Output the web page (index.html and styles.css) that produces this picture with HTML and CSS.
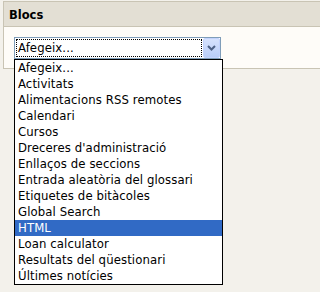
FILE: index.html
```html
<!DOCTYPE html>
<html lang="ca">
<head>
<meta charset="utf-8">
<title>Blocs</title>
<link rel="stylesheet" href="styles.css">
</head>
<body>
<div class="block">
  <div class="block-header"><h2 class="block-title">Blocs</h2></div>
  <div class="block-body">
    <div class="select-wrap">
      <div class="select">
        <div class="select-value">Afegeix...</div>
        <div class="select-button">
          <svg width="9" height="6" viewBox="0 0 9 6" aria-hidden="true"><polyline points="1,1 4.5,4.5 8,1" fill="none" stroke="#4d6185" stroke-width="2"/></svg>
        </div>
      </div>
      <ul class="listbox">
        <li class="option">Afegeix...</li>
        <li class="option">Activitats</li>
        <li class="option">Alimentacions RSS remotes</li>
        <li class="option">Calendari</li>
        <li class="option">Cursos</li>
        <li class="option">Dreceres d'administració</li>
        <li class="option">Enllaços de seccions</li>
        <li class="option">Entrada aleatòria del glossari</li>
        <li class="option">Etiquetes de bitàcoles</li>
        <li class="option">Global Search</li>
        <li class="option selected">HTML</li>
        <li class="option">Loan calculator</li>
        <li class="option">Resultats del qüestionari</li>
        <li class="option">Últimes notícies</li>
      </ul>
    </div>
  </div>
</div>
</body>
</html>
```

FILE: styles.css
```css
html, body {
  margin: 0;
  padding: 0;
  overflow: hidden;
}
body {
  background: #f3f1eb;
  font-family: "DejaVu Sans Condensed", "DejaVu Sans", Verdana, sans-serif;
  color: #000;
  height: 292px;
}
.block {
  margin: 1px 0 0 3px;
  border: 1px solid #c9c4b4;
  border-right: 0;
}
.block-header {
  background: #e3dfd4;
  border-bottom: 1px solid #c9c4b4;
  padding: 6px 0 4px 5px;
}
.block-title {
  margin: 0;
  font-family: "DejaVu Sans", Verdana, sans-serif;
  font-size: 11.5px;
  line-height: 14px;
  font-weight: bold;
  color: #000;
}
.block-body {
  background: #fefcf8;
  padding: 10px 0 9px 10px;
}
.select-wrap {
  position: relative;
  width: 207px;
}
.select {
  display: flex;
  height: 22px;
  box-sizing: border-box;
  border: 1px solid #7f9db9;
  background: #fff;
}
.select-value {
  flex: 1;
  margin: 1px;
  border: 1px dotted #000;
  padding-left: 1px;
  font-size: 13px;
  line-height: 16px;
  letter-spacing: 0.1px;
}
.select-button {
  width: 17px;
  box-sizing: border-box;
  border: 1px solid #c3d3fd;
  border-radius: 2px;
  background: linear-gradient(#d6e2fd, #b9cdf8);
  display: flex;
  align-items: center;
  justify-content: center;
}
.select-button svg {
  display: block;
}
.listbox {
  position: absolute;
  top: 22px;
  left: 0;
  width: 209px;
  box-sizing: border-box;
  margin: 0;
  padding: 0;
  list-style: none;
  border: 1px solid #000;
  background: #fff;
  z-index: 2;
}
.option {
  height: 16px;
  line-height: 16px;
  padding-left: 3px;
  font-size: 13px;
  letter-spacing: 0.1px;
  white-space: nowrap;
}
.option.selected {
  background: #316ac5;
  color: #fff;
}
```
